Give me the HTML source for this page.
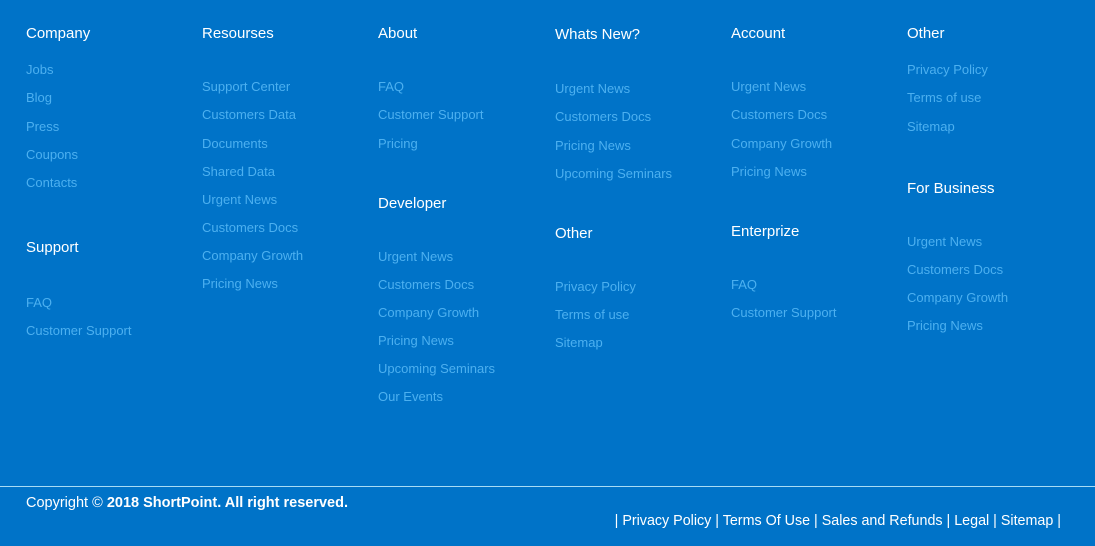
<!DOCTYPE html>
<html><head><meta charset="utf-8"><style>
body{margin:0;width:1095px;height:546px;background:#0073c8;font-family:"Liberation Sans",sans-serif;position:relative;overflow:hidden}
.h{position:absolute;color:#fff;font-size:15px;line-height:18px;white-space:nowrap}
.l{position:absolute;color:#4cb0f0;font-size:13px;line-height:16px;white-space:nowrap}
.line{position:absolute;left:0;top:486px;width:1095px;height:1px;background:#a8dcf5}
.c{position:absolute;left:26px;top:494px;color:#fff;font-size:14.5px;line-height:18px;white-space:nowrap}
.r{position:absolute;right:34px;top:512px;color:#fff;font-size:14.3px;line-height:18px;white-space:nowrap}
</style></head><body>
<div class="h" style="left:26px;top:25px">Company</div>
<div class="l" style="left:26px;top:62px">Jobs</div>
<div class="l" style="left:26px;top:90px">Blog</div>
<div class="l" style="left:26px;top:119px">Press</div>
<div class="l" style="left:26px;top:147px">Coupons</div>
<div class="l" style="left:26px;top:175px">Contacts</div>
<div class="h" style="left:26px;top:239px">Support</div>
<div class="l" style="left:26px;top:295px">FAQ</div>
<div class="l" style="left:26px;top:323px">Customer Support</div>

<div class="h" style="left:202px;top:25px">Resourses</div>
<div class="l" style="left:202px;top:79px">Support Center</div>
<div class="l" style="left:202px;top:107px">Customers Data</div>
<div class="l" style="left:202px;top:136px">Documents</div>
<div class="l" style="left:202px;top:164px">Shared Data</div>
<div class="l" style="left:202px;top:192px">Urgent News</div>
<div class="l" style="left:202px;top:220px">Customers Docs</div>
<div class="l" style="left:202px;top:248px">Company Growth</div>
<div class="l" style="left:202px;top:276px">Pricing News</div>

<div class="h" style="left:378px;top:25px">About</div>
<div class="l" style="left:378px;top:79px">FAQ</div>
<div class="l" style="left:378px;top:107px">Customer Support</div>
<div class="l" style="left:378px;top:136px">Pricing</div>
<div class="h" style="left:378px;top:195px">Developer</div>
<div class="l" style="left:378px;top:249px">Urgent News</div>
<div class="l" style="left:378px;top:277px">Customers Docs</div>
<div class="l" style="left:378px;top:305px">Company Growth</div>
<div class="l" style="left:378px;top:333px">Pricing News</div>
<div class="l" style="left:378px;top:361px">Upcoming Seminars</div>
<div class="l" style="left:378px;top:389px">Our Events</div>

<div class="h" style="left:555px;top:26px">Whats New?</div>
<div class="l" style="left:555px;top:81px">Urgent News</div>
<div class="l" style="left:555px;top:109px">Customers Docs</div>
<div class="l" style="left:555px;top:138px">Pricing News</div>
<div class="l" style="left:555px;top:166px">Upcoming Seminars</div>
<div class="h" style="left:555px;top:225px">Other</div>
<div class="l" style="left:555px;top:279px">Privacy Policy</div>
<div class="l" style="left:555px;top:307px">Terms of use</div>
<div class="l" style="left:555px;top:335px">Sitemap</div>

<div class="h" style="left:731px;top:25px">Account</div>
<div class="l" style="left:731px;top:79px">Urgent News</div>
<div class="l" style="left:731px;top:107px">Customers Docs</div>
<div class="l" style="left:731px;top:136px">Company Growth</div>
<div class="l" style="left:731px;top:164px">Pricing News</div>
<div class="h" style="left:731px;top:223px">Enterprize</div>
<div class="l" style="left:731px;top:277px">FAQ</div>
<div class="l" style="left:731px;top:305px">Customer Support</div>

<div class="h" style="left:907px;top:25px">Other</div>
<div class="l" style="left:907px;top:62px">Privacy Policy</div>
<div class="l" style="left:907px;top:90px">Terms of use</div>
<div class="l" style="left:907px;top:119px">Sitemap</div>
<div class="h" style="left:907px;top:180px">For Business</div>
<div class="l" style="left:907px;top:234px">Urgent News</div>
<div class="l" style="left:907px;top:262px">Customers Docs</div>
<div class="l" style="left:907px;top:290px">Company Growth</div>
<div class="l" style="left:907px;top:318px">Pricing News</div>

<div class="line"></div>
<div class="c">Copyright © <b>2018 ShortPoint. All right reserved.</b></div>
<div class="r">| Privacy Policy | Terms Of Use | Sales and Refunds | Legal | Sitemap |</div>
</body></html>
